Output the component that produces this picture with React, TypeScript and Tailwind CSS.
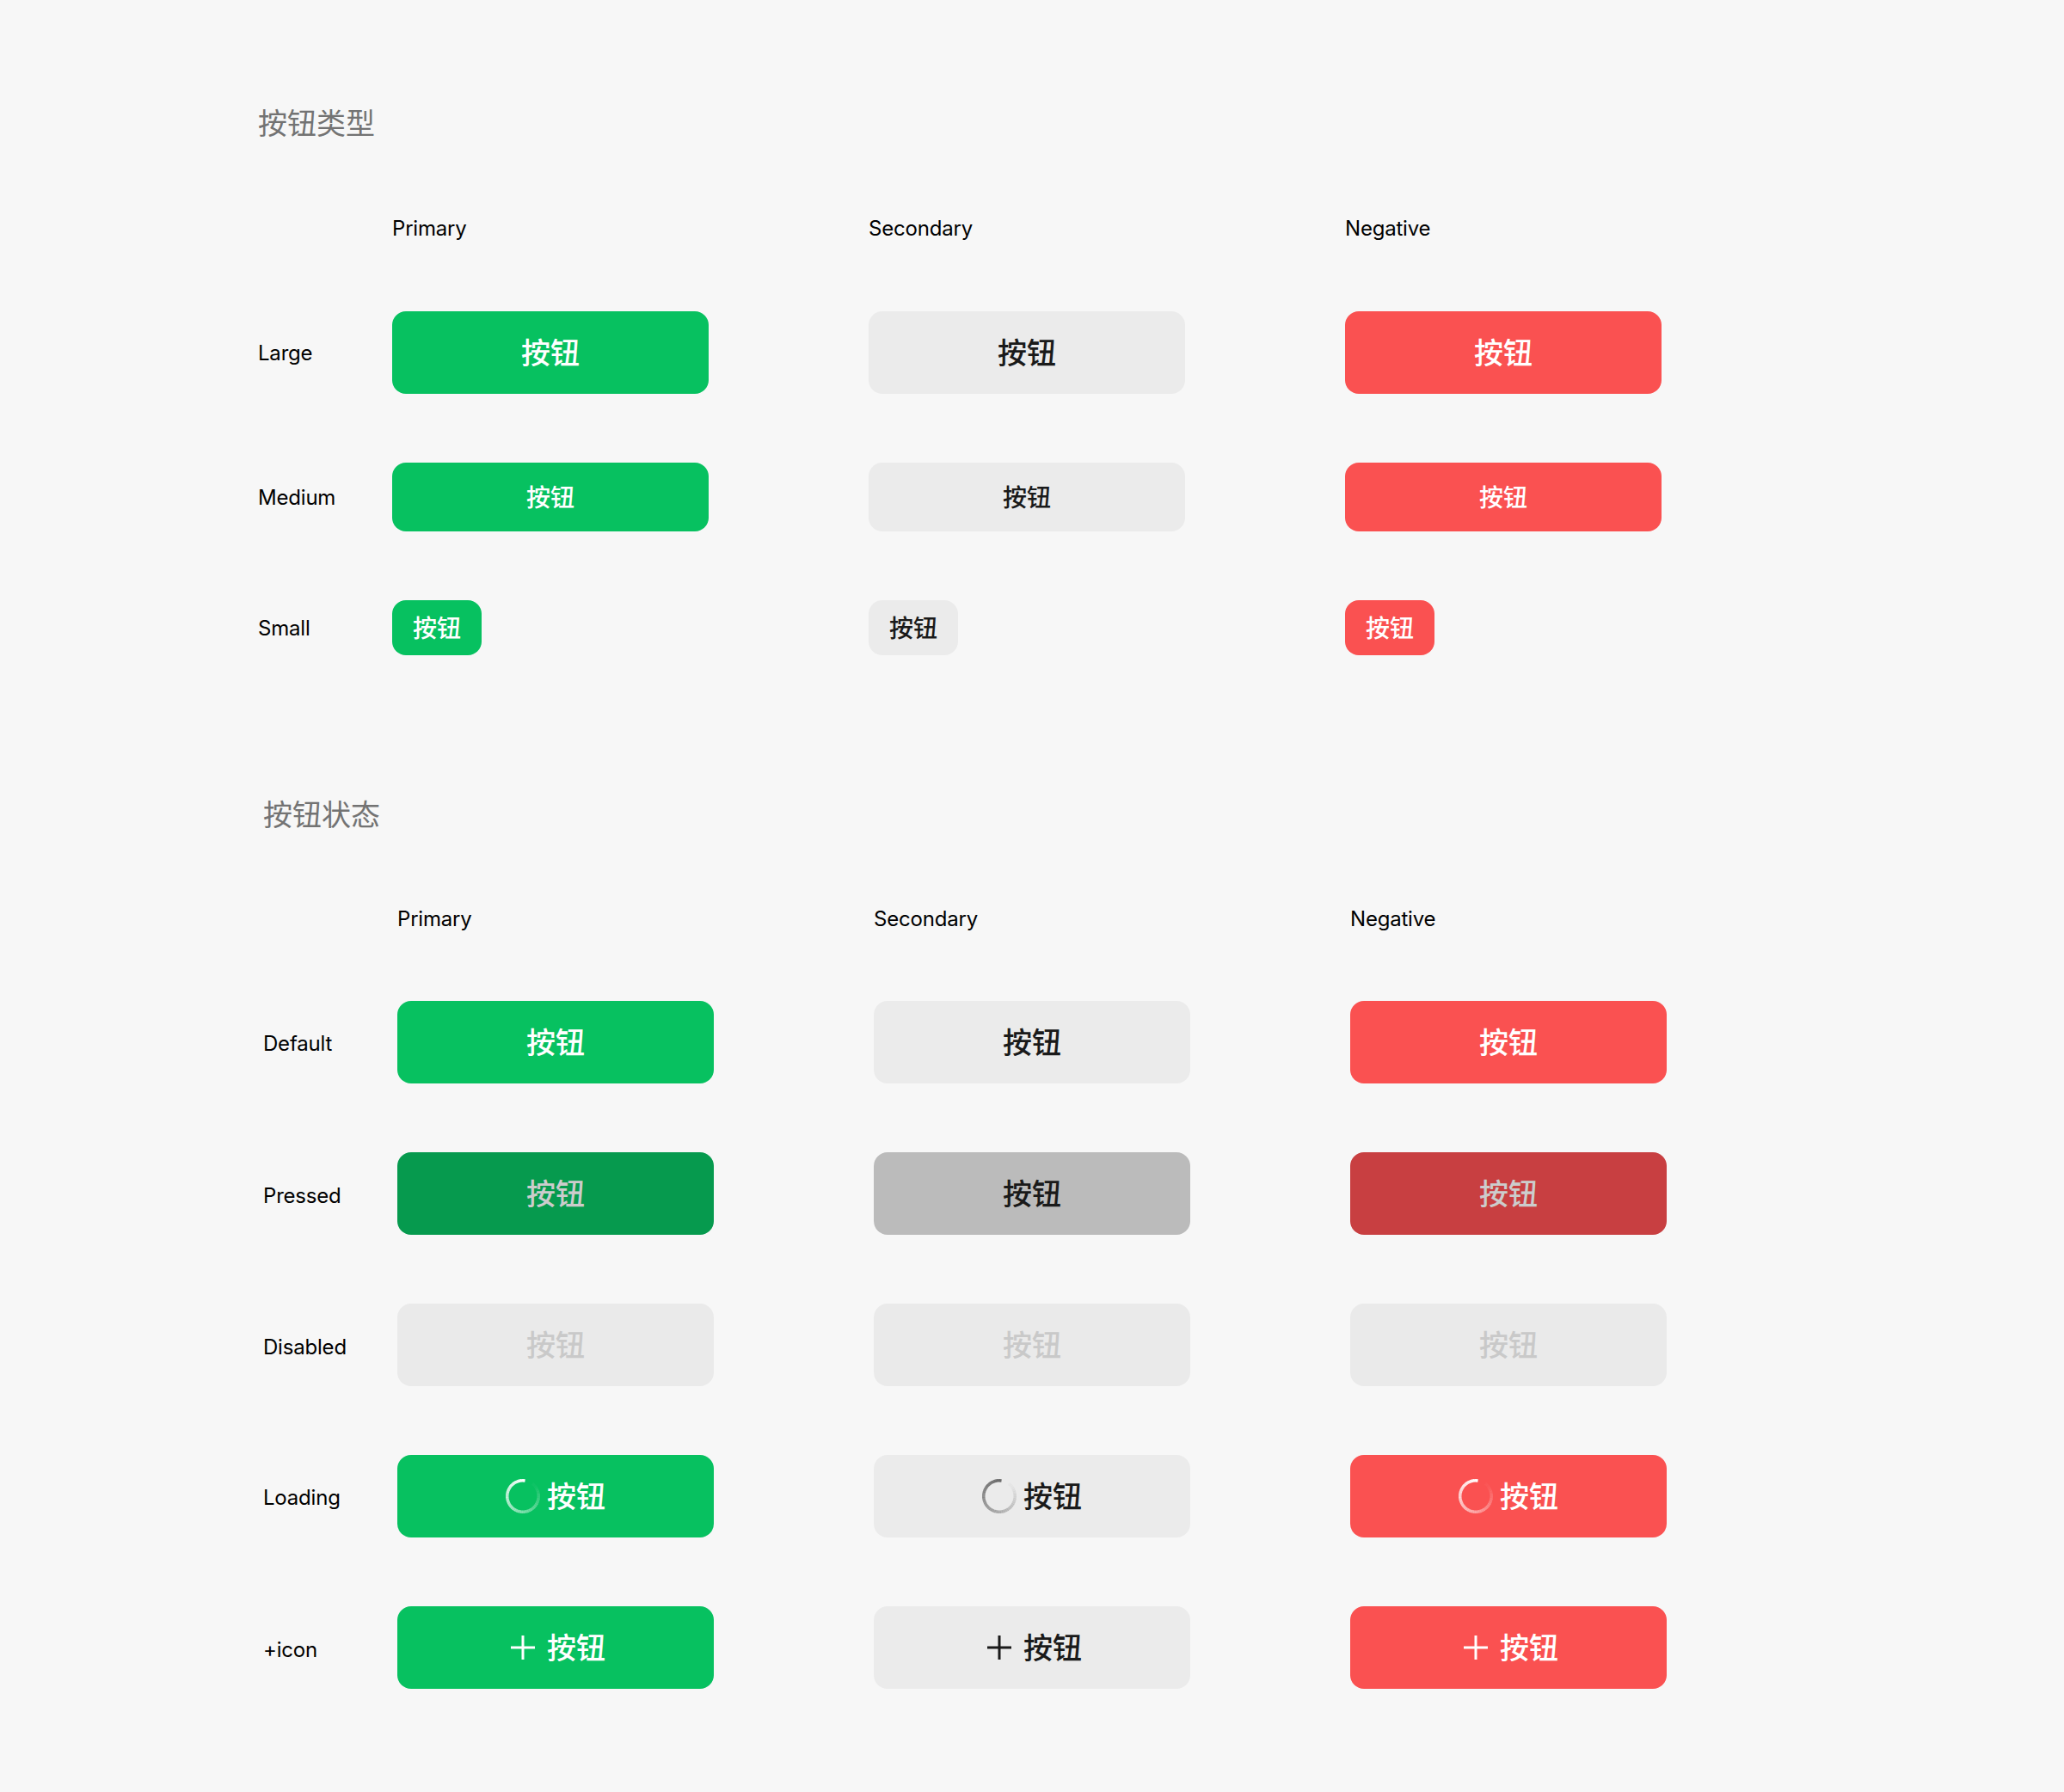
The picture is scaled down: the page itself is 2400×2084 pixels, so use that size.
import React from "react";

type Tone = "primary" | "secondary" | "negative";
const CJK = "font-['PingFang_SC','Noto_Sans_CJK_SC',sans-serif]";

function Spinner({ color }: { color: string }) {
  const segs = [];
  const n = 48;
  const r = 18.25;
  const start = 8;
  const sweep = 330;
  for (let i = 0; i < n; i++) {
    const a0 = ((start - (i * sweep) / n - 90) * Math.PI) / 180;
    const a1 = ((start - ((i + 1.15) * sweep) / n - 90) * Math.PI) / 180;
    const p = (a: number) => `${20 + r * Math.cos(a)} ${20 + r * Math.sin(a)}`;
    segs.push(
      <path key={i} d={`M${p(a0)}A${r} ${r} 0 0 0 ${p(a1)}`} stroke={color} strokeOpacity={Math.max(0.03, 1 - i / (n - 1))} strokeWidth="3.5" fill="none" />
    );
  }
  return <svg width="40" height="40" viewBox="0 0 40 40" className="shrink-0">{segs}</svg>;
}

function Plus({ color }: { color: string }) {
  return (
    <svg width="40" height="40" viewBox="0 0 40 40" className="shrink-0">
      <path d="M6 20H34M20 6V34" stroke={color} strokeWidth="3" fill="none" />
    </svg>
  );
}

const toneClass: Record<Tone, string> = {
  primary: "bg-[#07c160] text-white",
  secondary: "bg-[#ebebeb] text-[#1a1a1a]",
  negative: "bg-[#fa5151] text-white",
};
const pressedClass: Record<Tone, string> = {
  primary: "bg-[#069a4e] text-[#cccccc]",
  secondary: "bg-[#bbbbbb] text-[#1a1a1a]",
  negative: "bg-[#c83f41] text-[#cccccc]",
};

function Label({ children, pad = "pt-[3px]" }: { children: React.ReactNode; pad?: string }) {
  return <div className={`${pad} w-[156px] shrink-0 text-[24px] leading-[32px] tracking-[-0.2px] text-black font-['Inter',sans-serif]`}>{children}</div>;
}

function TypeBtn({ tone, size }: { tone: Tone; size: "l" | "m" | "s" }) {
  const cls = size === "l" ? "w-[368px] h-[96px] text-[34px] pb-[3px]" : size === "m" ? "w-[368px] h-[80px] text-[28px] pb-[2px]" : "w-[104px] h-[64px] text-[28px] pb-[2px]";
  return (
    <div className="w-[554px] shrink-0">
      <div className={`${cls} ${toneClass[tone]} ${CJK} font-medium rounded-[16px] flex items-center justify-center`}>按钮</div>
    </div>
  );
}

function StateBtn({ cls, icon }: { cls: string; icon?: React.ReactNode }) {
  return (
    <div className="w-[554px] shrink-0">
      <div className={`${cls} ${CJK} font-medium w-[368px] h-[96px] rounded-[16px] flex items-center justify-center gap-[8px] text-[34px]`}>
        {icon}
        <span className="pb-[4px]">按钮</span>
      </div>
    </div>
  );
}

function Header() {
  const cell = "w-[554px] text-[24px] leading-[32px] tracking-[-0.2px] text-black font-['Inter',sans-serif]";
  return (
    <div className="flex items-center h-[32px]">
      <div className="w-[156px] shrink-0" />
      <div className={cell}>Primary</div>
      <div className={cell}>Secondary</div>
      <div className={cell}>Negative</div>
    </div>
  );
}

const tones: Tone[] = ["primary", "secondary", "negative"];
const disabled = "bg-[#eaeaea] text-[#c9c9c9]";
const spinnerColor: Record<Tone, string> = { primary: "#ffffff", secondary: "#6a6a6a", negative: "#ffffff" };
const plusColor: Record<Tone, string> = { primary: "#ffffff", secondary: "#1a1a1a", negative: "#ffffff" };

export default function App() {
  return (
    <div className="w-[2400px] h-[2084px] bg-[#f7f7f7] pl-[300px] pt-[118px] overflow-hidden">
      <h2 className={`${CJK} text-[34px] leading-[48px] font-normal text-[#737373]`}>按钮类型</h2>
      <div className="mt-[84px]"><Header /></div>
      <div className="mt-[80px] flex items-center"><Label pad="pt-[1px]">Large</Label>{tones.map(t => <TypeBtn key={t} tone={t} size="l" />)}</div>
      <div className="mt-[80px] flex items-center"><Label pad="pt-[1px]">Medium</Label>{tones.map(t => <TypeBtn key={t} tone={t} size="m" />)}</div>
      <div className="mt-[80px] flex items-center"><Label pad="pt-[1px]">Small</Label>{tones.map(t => <TypeBtn key={t} tone={t} size="s" />)}</div>

      <div className="ml-[6px] mt-[160px]">
        <h2 className={`${CJK} text-[34px] leading-[48px] font-normal text-[#737373]`}>按钮状态</h2>
        <div className="mt-[83px]"><Header /></div>
        <div className="mt-[79px] flex flex-col gap-[80px]">
          <div className="flex items-center"><Label>Default</Label>{tones.map(t => <StateBtn key={t} cls={toneClass[t]} />)}</div>
          <div className="flex items-center"><Label pad="pt-[5px]">Pressed</Label>{tones.map(t => <StateBtn key={t} cls={pressedClass[t]} />)}</div>
          <div className="flex items-center"><Label pad="pt-[5px]">Disabled</Label>{tones.map(t => <StateBtn key={t} cls={disabled} />)}</div>
          <div className="flex items-center"><Label>Loading</Label>{tones.map(t => <StateBtn key={t} cls={toneClass[t]} icon={<Spinner color={spinnerColor[t]} />} />)}</div>
          <div className="flex items-center"><Label pad="pt-[5px]">+icon</Label>{tones.map(t => <StateBtn key={t} cls={toneClass[t]} icon={<Plus color={plusColor[t]} />} />)}</div>
        </div>
      </div>
    </div>
  );
}
